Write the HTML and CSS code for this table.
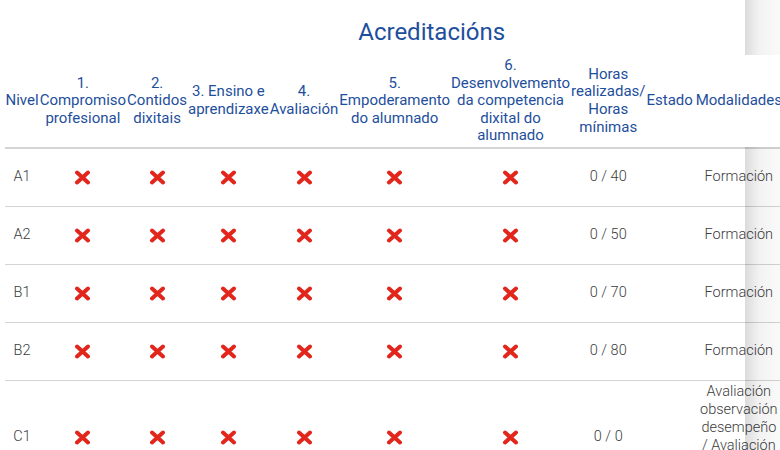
FILE: index.html
```html
<!DOCTYPE html>
<html lang="gl">
<head>
<meta charset="utf-8">
<title>Acreditacións</title>
<link rel="stylesheet" href="styles.css">
</head>
<body>
<div class="page">
  <div class="scroller">
    <table class="acc">
      <caption>Acreditacións</caption>
      <thead>
        <tr>
          <th>Nivel</th>
          <th>1. Compromiso profesional</th>
          <th>2. Contidos dixitais</th>
          <th>3. Ensino e aprendizaxe</th>
          <th>4. Avaliación</th>
          <th>5. Empoderamento do alumnado</th>
          <th>6. Desenvolvemento da competencia dixital do alumnado</th>
          <th>Horas realizadas/ Horas mínimas</th>
          <th>Estado</th>
          <th>Modalidades</th>
          <th>Certificado</th>
        </tr>
      </thead>
      <tbody>
        <tr>
          <td>A1</td>
          <td><svg class="x" viewBox="0 0 17 15"><path d="M3 2.5L14 12.5M14 2.5L3 12.5"/></svg></td>
          <td><svg class="x" viewBox="0 0 17 15"><path d="M3 2.5L14 12.5M14 2.5L3 12.5"/></svg></td>
          <td><svg class="x" viewBox="0 0 17 15"><path d="M3 2.5L14 12.5M14 2.5L3 12.5"/></svg></td>
          <td><svg class="x" viewBox="0 0 17 15"><path d="M3 2.5L14 12.5M14 2.5L3 12.5"/></svg></td>
          <td><svg class="x" viewBox="0 0 17 15"><path d="M3 2.5L14 12.5M14 2.5L3 12.5"/></svg></td>
          <td><svg class="x" viewBox="0 0 17 15"><path d="M3 2.5L14 12.5M14 2.5L3 12.5"/></svg></td>
          <td>0 / 40</td>
          <td></td>
          <td>Formación</td>
          <td></td>
        </tr>
        <tr>
          <td>A2</td>
          <td><svg class="x" viewBox="0 0 17 15"><path d="M3 2.5L14 12.5M14 2.5L3 12.5"/></svg></td>
          <td><svg class="x" viewBox="0 0 17 15"><path d="M3 2.5L14 12.5M14 2.5L3 12.5"/></svg></td>
          <td><svg class="x" viewBox="0 0 17 15"><path d="M3 2.5L14 12.5M14 2.5L3 12.5"/></svg></td>
          <td><svg class="x" viewBox="0 0 17 15"><path d="M3 2.5L14 12.5M14 2.5L3 12.5"/></svg></td>
          <td><svg class="x" viewBox="0 0 17 15"><path d="M3 2.5L14 12.5M14 2.5L3 12.5"/></svg></td>
          <td><svg class="x" viewBox="0 0 17 15"><path d="M3 2.5L14 12.5M14 2.5L3 12.5"/></svg></td>
          <td>0 / 50</td>
          <td></td>
          <td>Formación</td>
          <td></td>
        </tr>
        <tr>
          <td>B1</td>
          <td><svg class="x" viewBox="0 0 17 15"><path d="M3 2.5L14 12.5M14 2.5L3 12.5"/></svg></td>
          <td><svg class="x" viewBox="0 0 17 15"><path d="M3 2.5L14 12.5M14 2.5L3 12.5"/></svg></td>
          <td><svg class="x" viewBox="0 0 17 15"><path d="M3 2.5L14 12.5M14 2.5L3 12.5"/></svg></td>
          <td><svg class="x" viewBox="0 0 17 15"><path d="M3 2.5L14 12.5M14 2.5L3 12.5"/></svg></td>
          <td><svg class="x" viewBox="0 0 17 15"><path d="M3 2.5L14 12.5M14 2.5L3 12.5"/></svg></td>
          <td><svg class="x" viewBox="0 0 17 15"><path d="M3 2.5L14 12.5M14 2.5L3 12.5"/></svg></td>
          <td>0 / 70</td>
          <td></td>
          <td>Formación</td>
          <td></td>
        </tr>
        <tr>
          <td>B2</td>
          <td><svg class="x" viewBox="0 0 17 15"><path d="M3 2.5L14 12.5M14 2.5L3 12.5"/></svg></td>
          <td><svg class="x" viewBox="0 0 17 15"><path d="M3 2.5L14 12.5M14 2.5L3 12.5"/></svg></td>
          <td><svg class="x" viewBox="0 0 17 15"><path d="M3 2.5L14 12.5M14 2.5L3 12.5"/></svg></td>
          <td><svg class="x" viewBox="0 0 17 15"><path d="M3 2.5L14 12.5M14 2.5L3 12.5"/></svg></td>
          <td><svg class="x" viewBox="0 0 17 15"><path d="M3 2.5L14 12.5M14 2.5L3 12.5"/></svg></td>
          <td><svg class="x" viewBox="0 0 17 15"><path d="M3 2.5L14 12.5M14 2.5L3 12.5"/></svg></td>
          <td>0 / 80</td>
          <td></td>
          <td>Formación</td>
          <td></td>
        </tr>
        <tr>
          <td>C1</td>
          <td><svg class="x" viewBox="0 0 17 15"><path d="M3 2.5L14 12.5M14 2.5L3 12.5"/></svg></td>
          <td><svg class="x" viewBox="0 0 17 15"><path d="M3 2.5L14 12.5M14 2.5L3 12.5"/></svg></td>
          <td><svg class="x" viewBox="0 0 17 15"><path d="M3 2.5L14 12.5M14 2.5L3 12.5"/></svg></td>
          <td><svg class="x" viewBox="0 0 17 15"><path d="M3 2.5L14 12.5M14 2.5L3 12.5"/></svg></td>
          <td><svg class="x" viewBox="0 0 17 15"><path d="M3 2.5L14 12.5M14 2.5L3 12.5"/></svg></td>
          <td><svg class="x" viewBox="0 0 17 15"><path d="M3 2.5L14 12.5M14 2.5L3 12.5"/></svg></td>
          <td>0 / 0</td>
          <td></td>
          <td>Avaliación observación desempeño /&nbsp;Avaliación competencias dixitais</td>
          <td></td>
        </tr>
      </tbody>
    </table>
  </div>
  <div class="edge-shadow"></div>
</div>
</body>
</html>
```

FILE: styles.css
```css
html, body {
  margin: 0;
  padding: 0;
  background: #ffffff;
}

body {
  font-family: Roboto, "Liberation Sans", sans-serif;
  font-size: 14px;
}

.page {
  position: relative;
  width: 780px;
  height: 450px;
  overflow: hidden;
}

.scroller {
  padding-left: 5px;
}

.acc {
  width: 1px;
  border-collapse: collapse;
}

.acc caption {
  font-size: 24px;
  line-height: 28px;
  font-weight: 400;
  color: #1e4f9c;
  padding: 18px 0 9px;
  text-align: center;
}

.acc th {
  position: relative;
  z-index: 2;
  background: #ffffff;
  color: #1e4f9c;
  font-size: 15px;
  font-weight: 400;
  line-height: 17.6px;
  padding: 2px 0.5px;
  text-align: center;
  vertical-align: middle;
  border-bottom: 2px solid #d4d4d4;
}

.acc td {
  color: #3c3c3c;
  font-size: 14.5px;
  font-weight: 300;
  line-height: 18px;
  height: 53px;
  padding: 2px 0.5px;
  text-align: center;
  vertical-align: middle;
  border-bottom: 1px solid #d4d4d4;
}

.x {
  display: inline-block;
  width: 17px;
  height: 15px;
  vertical-align: middle;
  fill: none;
  stroke: #e3261c;
  stroke-width: 4;
  stroke-linecap: round;
}

.edge-shadow {
  position: absolute;
  top: 0;
  bottom: 0;
  left: 745px;
  width: 35px;
  z-index: 1;
  background: linear-gradient(to right, rgba(0, 0, 0, 0.14), rgba(0, 0, 0, 0.05) 40%, rgba(0, 0, 0, 0.02));
  pointer-events: none;
}
```
